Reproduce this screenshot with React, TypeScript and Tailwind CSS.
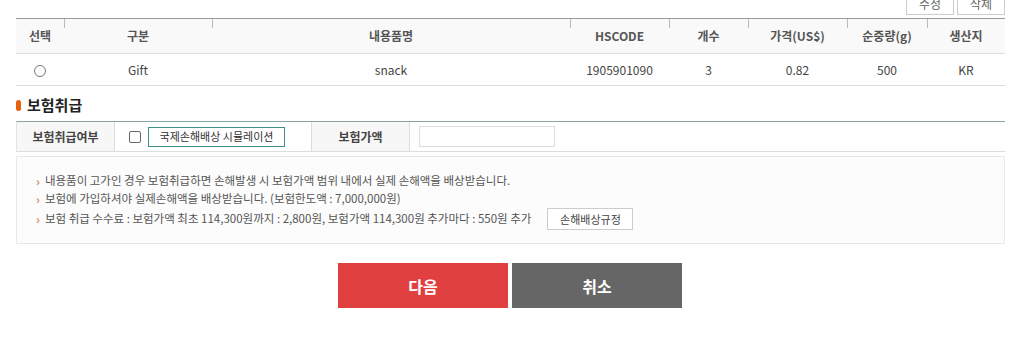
import React from "react";

const font = { fontFamily: '"Noto Sans CJK KR", "Noto Sans", sans-serif' };

const cols = [
  { label: "선택", w: "w-[48px]" },
  { label: "구분", w: "w-[148px]" },
  { label: "내용품명", w: "w-[358px]" },
  { label: "HSCODE", w: "w-[99px]" },
  { label: "개수", w: "w-[79px]" },
  { label: "가격(US$)", w: "w-[99px]" },
  { label: "순중량(g)", w: "w-[80px]" },
  { label: "생산지", w: "w-[78px]" },
];

const row = ["", "Gift", "snack", "1905901090", "3", "0.82", "500", "KR"];

function Bullet() {
  return <span className="mr-[5px] text-[12px] font-bold text-[#e0884a]">›</span>;
}

export default function App() {
  return (
    <div className="w-[1021px] h-[358px] overflow-hidden bg-white text-[12px] text-[#444]" style={font}>
      <div className="ml-[16px] w-[989px]">
        {/* top action buttons */}
        <div className="-mt-[7px] flex justify-end gap-[3px]">
          <button className="h-[22px] w-[48px] border border-[#ccc] bg-white text-[12px] text-[#666]">수정</button>
          <button className="h-[22px] w-[48px] border border-[#ccc] bg-white text-[12px] text-[#666]">삭제</button>
        </div>

        {/* item table */}
        <div className="mt-[3px] border-t border-[#999]">
          <div className="flex h-[35px] bg-[#f9f9f9] border-b border-[#ddd]">
            {cols.map((c, i) => (
              <div key={c.label} className={`relative ${c.w} flex items-center justify-center font-semibold text-[#555]`}>
                {i > 0 ? <span className="absolute left-0 top-0 h-[9px] w-px bg-[#bbb]" /> : null}
                {c.label}
              </div>
            ))}
          </div>
          <div className="flex h-[32px] border-b border-[#ddd]">
            {cols.map((c, i) => (
              <div key={c.label} className={`${c.w} flex items-center justify-center text-[#444]`}>
                {i === 0 ? (
                  <span className="mt-[2px] h-[12px] w-[12px] rounded-full border border-[#777] bg-white" />
                ) : (
                  row[i]
                )}
              </div>
            ))}
          </div>
        </div>

        {/* section title */}
        <div className="mt-[10px] flex h-[19px] items-center">
          <span className="h-[11px] w-[5px] rounded-full bg-[#e8620e]" />
          <span className="ml-[6px] text-[15px] font-bold text-[#222]">보험취급</span>
        </div>

        {/* insurance table */}
        <div className="mt-[6px] flex h-[31px] border-t border-[#86a5a2] border-b border-b-[#ddd] border-l border-l-[#e3e3e3]">
          <div className="flex w-[98px] items-center justify-center bg-[#f7f7f7] border-r border-[#ddd] font-semibold text-[#444]">
            보험취급여부
          </div>
          <div className="flex w-[197px] items-center border-r border-[#ddd] pl-[14px]">
            <span className="h-[12px] w-[12px] rounded-[2px] border border-[#666] bg-white" />
            <button className="ml-[7px] h-[20px] w-[137px] border border-[#3f8f86] bg-white text-[11px] text-[#333]">
              국제손해배상 시뮬레이션
            </button>
          </div>
          <div className="flex w-[98px] items-center justify-center bg-[#f7f7f7] border-r border-[#ddd] font-semibold text-[#444]">
            보험가액
          </div>
          <div className="flex flex-1 items-center pl-[9px]">
            <div className="h-[21px] w-[136px] border border-[#ddd] bg-white" />
          </div>
        </div>

        {/* info box */}
        <div className="mt-[4px] h-[88px] border border-[#e8e8e8] bg-[#fcfcfc] pl-[19px] pt-[15px] text-[11.5px] text-[#555]">
          <div className="flex h-[18px] items-center">
            <Bullet />
            내용품이 고가인 경우 보험취급하면 손해발생 시 보험가액 범위 내에서 실제 손해액을 배상받습니다.
          </div>
          <div className="flex h-[18px] items-center">
            <Bullet />
            보험에 가입하셔야 실제손해액을 배상받습니다. (보험한도액 : 7,000,000원)
          </div>
          <div className="flex h-[22px] items-center">
            <Bullet />
            보험 취급 수수료 : 보험가액 최초 114,300원까지 : 2,800원, 보험가액 114,300원 추가마다 : 550원 추가
            <button className="ml-[16px] h-[22px] w-[86px] border border-[#ccc] bg-white text-[11px] text-[#444]">
              손해배상규정
            </button>
          </div>
        </div>

        {/* actions */}
        <div className="mt-[19px] flex justify-center gap-[4px] pr-[1px]">
          <button className="h-[45px] w-[170px] bg-[#e04040] text-[16px] font-bold text-white">다음</button>
          <button className="h-[45px] w-[170px] bg-[#666666] text-[16px] font-bold text-white">취소</button>
        </div>
      </div>
    </div>
  );
}
